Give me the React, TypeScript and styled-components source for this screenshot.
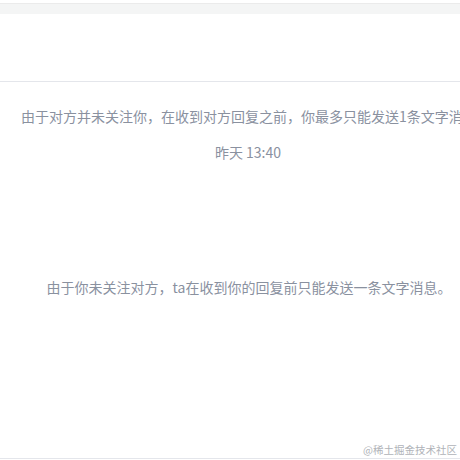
import styled, { createGlobalStyle } from "styled-components";

const GlobalStyle = createGlobalStyle`
  html, body {
    margin: 0;
    padding: 0;
    background: #fff;
    font-family: "Noto Sans CJK SC", "Noto Sans", sans-serif;
  }
`;

const Page = styled.div`
  width: 460px;
  height: 460px;
  display: flex;
  flex-direction: column;
  overflow: hidden;
  position: relative;
`;

const TopBar = styled.div`
  margin-top: 3px;
  height: 10px;
  background: #f4f5f5;
  border-top: 1px solid #ebebeb;
`;

const Header = styled.div`
  height: 67px;
  border-bottom: 1px solid #e4e6eb;
`;

const Notice = styled.p<{ $pad?: number; $center?: boolean }>`
  margin: 0;
  padding-left: ${(p) => p.$pad ?? 0}px;
  font-size: 14px;
  line-height: 20px;
  color: #8a919f;
  white-space: nowrap;
  text-align: ${(p) => (p.$center ? "center" : "left")};
`;

const Time = styled.div`
  margin-top: 17px;
  padding-left: 36px;
  text-align: center;
  font-size: 14px;
  line-height: 18px;
  color: #8a919f;
`;

const Body = styled.div`
  display: flex;
  flex-direction: column;
  padding-top: 24px;
`;

const Second = styled.div`
  margin-top: 116px;
`;

const Footer = styled.div`
  margin-top: auto;
  height: 18px;
  border-bottom: 1px solid #e4e6eb;
  display: flex;
  justify-content: flex-end;
  align-items: center;
  padding-right: 3px;
  margin-bottom: 1px;
`;

const Mark = styled.span`
  font-size: 10.5px;
  color: #b0b3b8;
  font-family: "Noto Sans CJK SC", serif;
`;

export default function App() {
  return (
    <>
      <GlobalStyle />
      <Page>
        <TopBar />
        <Header />
        <Body>
          <Notice $pad={21}>
            由于对方并未关注你，在收到对方回复之前，你最多只能发送1条文字消息。
          </Notice>
          <Time>昨天 13:40</Time>
          <Second>
            <Notice $center $pad={38}>
              由于你未关注对方，ta在收到你的回复前只能发送一条文字消息。
            </Notice>
          </Second>
        </Body>
        <Footer>
          <Mark>@稀土掘金技术社区</Mark>
        </Footer>
      </Page>
    </>
  );
}
